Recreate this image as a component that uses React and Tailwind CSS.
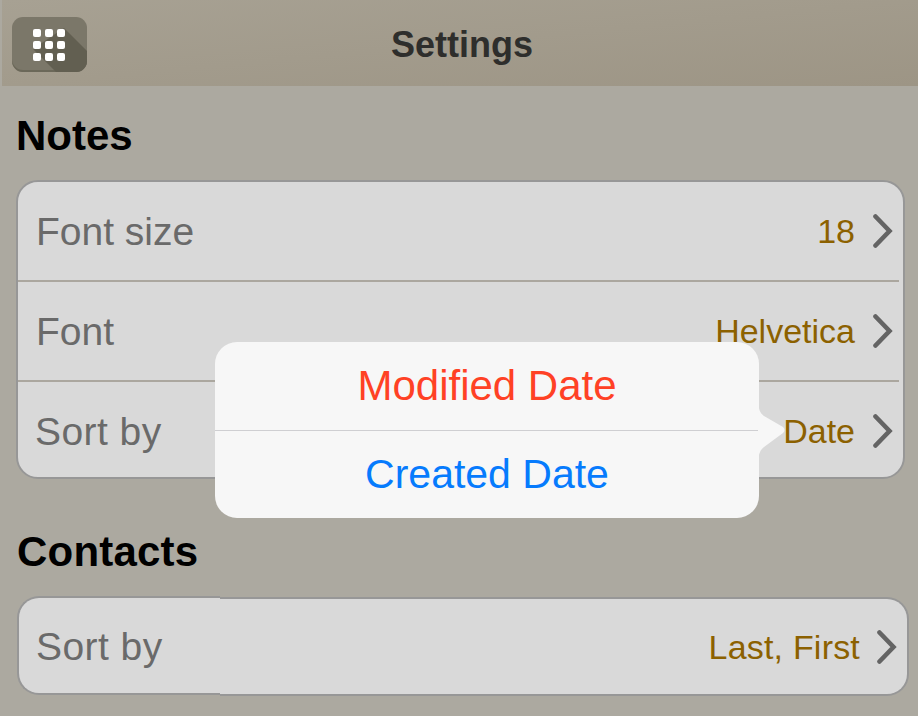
const font = { fontFamily: '"Liberation Sans", Arial, sans-serif' };

function Chevron() {
  return (
    <svg width="20" height="34" viewBox="0 0 20 34" className="block shrink-0" fill="none">
      <path d="M2.5 2.5 L16.5 17 L2.5 31.5" stroke="#646464" strokeWidth="4.6" strokeLinecap="round" strokeLinejoin="miter" />
    </svg>
  );
}

function Row({ label, value, divider, wide }) {
  return (
    <div className="relative flex h-[100px] items-center pl-[18px] pr-[10px]">
      <span className={wide ? "mb-[2px] ml-[-1px] text-[39px] leading-none tracking-[0.45px] text-[#6a6a6a]" : "mb-[2px] text-[39px] leading-none text-[#6a6a6a]"}>{label}</span>
      <span className="mb-[2px] ml-auto text-[34px] leading-none text-[#8c6100]">{value}</span>
      <span className="mb-[2px] ml-[18px]"><Chevron /></span>
      {divider && <div className="absolute bottom-0 left-0 right-[4px] h-[2px] bg-[#aba79f]" />}
    </div>
  );
}

function Grid() {
  return (
    <div className="relative z-10 mr-[1px] grid grid-cols-3 gap-[4px]">
      {Array.from({ length: 9 }).map((_, i) => (
        <span key={i} className="h-[8px] w-[8px] rounded-[2px] bg-white" />
      ))}
    </div>
  );
}

export default function App() {
  return (
    <div style={font} className="relative h-[716px] w-[918px] overflow-hidden bg-[#aca9a0]">
      <header className="relative ml-[2px] flex h-[86px] items-center justify-center bg-gradient-to-br from-[#a7a193] to-[#9d9585]">
        <button className="absolute left-[10px] top-[17px] flex h-[55px] w-[75px] items-center justify-center overflow-hidden rounded-[11px] bg-[#7b7769] shadow-[inset_0_-2px_0_#6b6859]">
          <svg className="absolute inset-0" width="75" height="55" viewBox="0 0 75 55">
            <path d="M52 11 L75 34 L75 55 L44 55 L21 32 Z" fill="#625f51" />
          </svg>
          <Grid />
        </button>
        <h1 className="ml-[4px] mt-[3px] text-[36px] font-bold leading-none text-[#2e2e2c]">Settings</h1>
      </header>

      <section className="pl-[16px] pr-[13px] pt-[29px]">
        <h2 className="text-[42px] font-bold leading-[42px] text-black">Notes</h2>
        <div className="mt-[23px] h-[299px] overflow-hidden rounded-[22px] border-2 border-[#979797] bg-[#d9d9d9]">
          <Row label="Font size" value="18" divider />
          <Row label="Font" value="Helvetica" divider />
          <Row label="Sort by" value="Date" wide />
        </div>
      </section>

      <section className="pl-[17px] pr-[9px] pt-[52px]">
        <h2 className="text-[42px] font-bold leading-[42px] tracking-[0.2px] text-black">Contacts</h2>
        <div className="mt-[23px] flex">
          <div className="flex h-[99px] w-[203px] items-center rounded-l-[22px] border-y-2 border-l-2 border-[#979797] bg-[#d9d9d9] pl-[17px]">
            <span className="mt-[1px] text-[39px] leading-none tracking-[0.45px] text-[#6a6a6a]">Sort by</span>
          </div>
          <div className="mt-[1px] flex h-[99px] flex-1 items-center justify-end rounded-r-[22px] border-y-2 border-r-2 border-[#979797] bg-[#d9d9d9] pr-[10px]">
            <span className="text-[34px] leading-none tracking-[0.2px] text-[#8c6100]">Last, First</span>
            <span className="ml-[17px]"><Chevron /></span>
          </div>
        </div>
      </section>

      <div className="absolute left-[215px] top-[342px] w-[544px] rounded-[22px] bg-[#f7f7f7] text-center leading-none">
        <div className="flex h-[89px] items-center justify-center border-b border-[#cfcfd2] text-[42px] text-[#ff4125]">Modified Date</div>
        <div className="flex h-[87px] items-center justify-center text-[41px] text-[#067bfd]">Created Date</div>
        <svg className="absolute left-[543px] top-[60px]" width="29" height="58" viewBox="0 0 29 58">
          <path d="M0 0 C1 8 2 11 6 14 L25 25 Q28 28 25 31 L6 45 C2 48 1 52 0 58 Z" fill="#f7f7f7" />
        </svg>
      </div>
    </div>
  );
}
